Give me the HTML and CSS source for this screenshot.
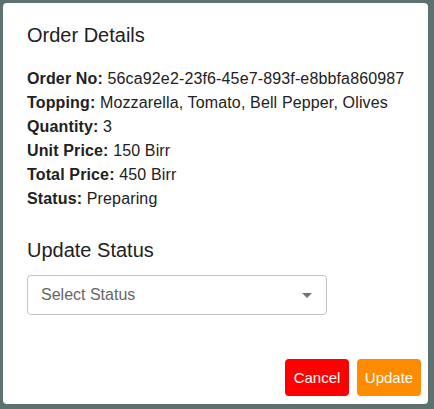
FILE: index.html
```html
<!DOCTYPE html>
<html lang="en">
<head>
<meta charset="utf-8">
<link rel="stylesheet" href="styles.css">
</head>
<body>
<div class="modal">
  <h2 class="title">Order Details</h2>
  <div class="details">
    <p><b>Order No:</b> 56ca92e2-23f6-45e7-893f-e8bbfa860987</p>
    <p><b>Topping:</b> Mozzarella, Tomato, Bell Pepper, Olives</p>
    <p><b>Quantity:</b> 3</p>
    <p><b>Unit Price:</b> 150 Birr</p>
    <p><b>Total Price:</b> 450 Birr</p>
    <p><b>Status:</b> Preparing</p>
  </div>
  <h2 class="subtitle">Update Status</h2>
  <div class="select">
    <span class="placeholder">Select Status</span>
    <svg class="caret" width="10" height="5" viewBox="0 0 10 5"><path d="M0 0H10L5 5Z" fill="#757575"/></svg>
  </div>
  <div class="actions">
    <button class="btn cancel">Cancel</button>
    <button class="btn update">Update</button>
  </div>
</div>
</body>
</html>
```
FILE: styles.css
```css
html, body {
  margin: 0;
  padding: 0;
  background: #5e7171;
  height: 100%;
}
body {
  padding: 3px 6px 5px 3px;
  box-sizing: border-box;
  font-family: "Liberation Sans", Arial, sans-serif;
  color: #212121;
}
.modal {
  background: #fff;
  border-radius: 4px;
  width: 425px;
  height: 401px;
  box-sizing: border-box;
  padding: 20px 7px 8px 24px;
  display: flex;
  flex-direction: column;
}
.title, .subtitle {
  margin: 0;
  font-weight: normal;
  font-size: 20px;
  line-height: 24px;
}
.details {
  margin-top: 20px;
}
.details p {
  margin: 0;
  font-size: 16px;
  line-height: 24px;
  letter-spacing: 0.14px;
}
.subtitle {
  margin-top: 27px;
}
.select {
  margin-top: 13px;
  width: 300px;
  height: 40px;
  box-sizing: border-box;
  border: 1px solid #c4c4c4;
  border-radius: 4px;
  display: flex;
  align-items: center;
  justify-content: space-between;
  padding: 0 14px 0 13px;
}
.placeholder {
  font-size: 16px;
  color: #666;
}
.actions {
  margin-top: auto;
  display: flex;
  justify-content: flex-end;
  gap: 8px;
}
.btn {
  border: none;
  border-radius: 4px;
  width: 64px;
  height: 37px;
  color: #fff;
  font-family: "Liberation Sans", Arial, sans-serif;
  font-size: 15px;
  padding: 0;
}
.cancel { background: #ff0000; }
.update { background: #ff8c00; }
```
